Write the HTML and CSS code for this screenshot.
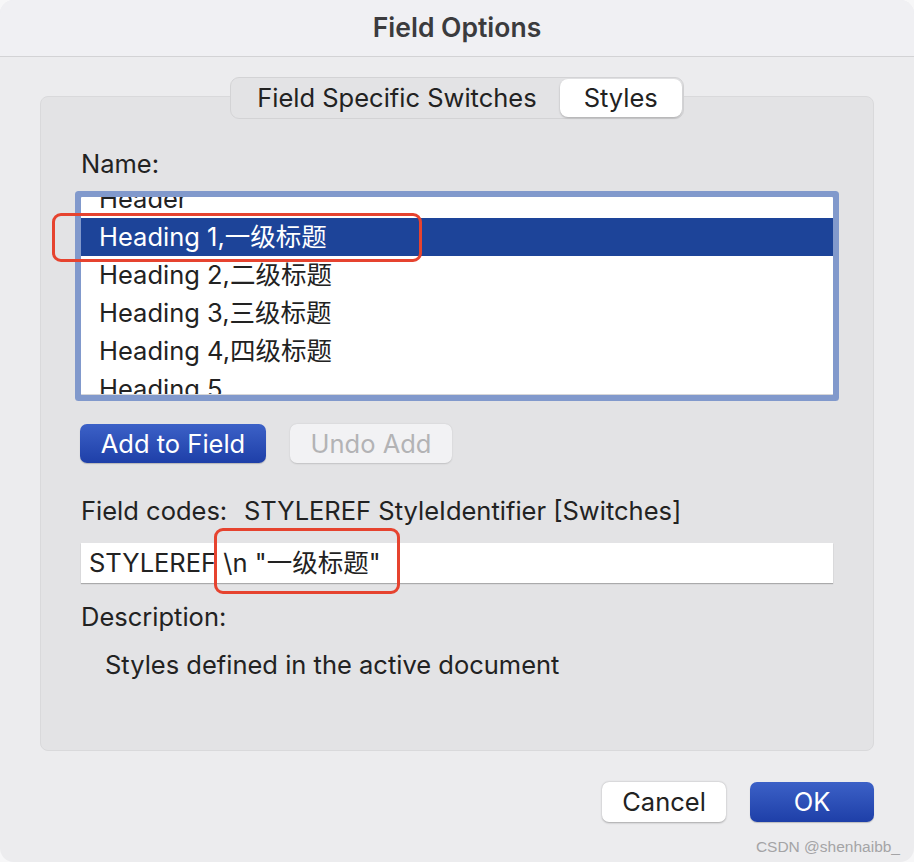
FILE: index.html
```html
<!DOCTYPE html>
<html>
<head>
<meta charset="utf-8">
<link rel="stylesheet" href="styles.css">
</head>
<body>
<div class="window">
  <div class="titlebar"><span class="title">Field Options</span></div>
  <div class="content">
    <div class="segmented">
      <div class="seg">Field Specific Switches</div>
      <div class="seg seg-active">Styles</div>
    </div>
    <div class="panel">
      <div class="label">Name:</div>
      <div class="list-wrap">
        <div class="list">
          <ul class="rows">
            <li class="row">Header</li>
            <li class="row row-sel">Heading 1,一级标题</li>
            <li class="row">Heading 2,二级标题</li>
            <li class="row">Heading 3,三级标题</li>
            <li class="row">Heading 4,四级标题</li>
            <li class="row">Heading 5</li>
          </ul>
        </div>
        <div class="mark mark-list"></div>
      </div>
      <div class="btn-row">
        <div class="btn btn-primary btn-add">Add to Field</div>
        <div class="btn btn-disabled btn-undo">Undo Add</div>
      </div>
      <div class="codes"><span class="codes-label">Field codes:</span><span class="codes-value">STYLEREF StyleIdentifier [Switches]</span></div>
      <div class="input-wrap">
        <div class="input">STYLEREF \n "一级标题"</div>
        <div class="mark mark-input"></div>
      </div>
      <div class="label desc-label">Description:</div>
      <div class="desc">Styles defined in the active document</div>
    </div>
    <div class="footer">
      <div class="btn btn-white btn-foot">Cancel</div>
      <div class="btn btn-primary btn-foot">OK</div>
    </div>
  </div>
  <div class="watermark">CSDN @shenhaibb_</div>
</div>
</body>
</html>
```

FILE: styles.css
```css
* { box-sizing: border-box; }
html, body {
  margin: 0;
  padding: 0;
  background: #f7f7f8;
}
body {
  width: 914px;
  height: 862px;
  font-family: Inter, "Noto Sans CJK SC", sans-serif;
  color: #222222;
  font-size: 25.5px;
  overflow: hidden;
}
.window {
  position: relative;
  width: 914px;
  height: 862px;
  background: #ececee;
  border-radius: 14px;
  overflow: hidden;
  display: flex;
  flex-direction: column;
}
.titlebar {
  height: 57px;
  background: #f0f0f3;
  border-bottom: 1px solid #d3d3d5;
  display: flex;
  align-items: center;
  justify-content: center;
  padding-bottom: 3px;
}
.title {
  font-weight: 600;
  font-size: 26.5px;
  color: #3b3b3d;
}
.content {
  padding: 0 40px;
  display: flex;
  flex-direction: column;
}
.segmented {
  position: relative;
  z-index: 1;
  align-self: center;
  margin-top: 20px;
  height: 42px;
  display: flex;
  align-items: center;
  padding: 0 1px;
  background: #e3e3e5;
  border: 1px solid #d3d3d5;
  border-radius: 9px;
}
.seg {
  height: 38px;
  line-height: 38px;
  padding: 0 23px 0 25px;
  color: #222222;
}
.seg-active {
  background: #ffffff;
  border-radius: 8px;
  box-shadow: 0 1px 2px rgba(0,0,0,0.25);
  padding: 0 24px;
}
.panel {
  margin-top: -23px;
  height: 655px;
  background: #e3e3e5;
  border: 1px solid #d9d9db;
  border-radius: 8px;
  padding: 54px 40px 0 40px;
  display: flex;
  flex-direction: column;
}
.label {
  line-height: 26px;
  height: 26px;
}
.list-wrap {
  position: relative;
  margin-top: 20px;
}
.list {
  height: 198px;
  background: #ffffff;
  overflow: hidden;
  border-radius: 1px;
  border-bottom: 1px solid #d6d6d8;
  box-shadow: 0 0 0 6px #8199cc;
}
.rows {
  list-style: none;
  margin: -17px 0 0 0;
  padding: 0;
}
.row {
  height: 38px;
  line-height: 38px;
  padding-left: 18px;
  white-space: nowrap;
}
.row-sel {
  background: #1d4499;
  color: #ffffff;
}
.mark {
  position: absolute;
  border: 3px solid #e6432f;
  border-radius: 9px;
}
.mark-list {
  left: -29px;
  top: 16px;
  width: 370px;
  height: 49px;
}
.btn-row {
  margin-top: 29px;
  display: flex;
  gap: 24px;
}
.btn {
  height: 39px;
  line-height: 39px;
  border-radius: 7px;
  text-align: center;
}
.btn-primary {
  color: #ffffff;
  background: linear-gradient(#3c61c7, #1e3fa8);
  box-shadow: 0 1px 1px rgba(0,0,0,0.2);
}
.btn-add {
  width: 186px;
  margin-left: -1px;
}
.btn-disabled {
  background: #f2f2f4;
  color: #b3b3b5;
  box-shadow: 0 0.5px 1.5px rgba(0,0,0,0.15);
}
.btn-undo {
  width: 162px;
}
.codes {
  margin-top: 35px;
  line-height: 26px;
  height: 26px;
  display: flex;
  white-space: nowrap;
}
.codes-label {
  width: 163px;
}
.input-wrap {
  position: relative;
  margin-top: 19px;
}
.input {
  height: 40px;
  line-height: 40px;
  background: #ffffff;
  padding-left: 8px;
  box-shadow: 0 1px 1px rgba(0,0,0,0.25);
}
.mark-input {
  left: 133px;
  top: -15px;
  width: 186px;
  height: 66px;
}
.desc-label {
  margin-top: 21px;
}
.desc {
  margin-top: 22px;
  line-height: 26px;
  padding-left: 24px;
}
.footer {
  margin-top: 31px;
  display: flex;
  justify-content: flex-end;
  gap: 24px;
}
.btn-foot {
  width: 124px;
  height: 40px;
  line-height: 40px;
}
.btn-white {
  background: #ffffff;
  color: #222222;
  box-shadow: 0 0.5px 2px rgba(0,0,0,0.3);
}
.watermark {
  position: absolute;
  right: 14px;
  bottom: 6px;
  font-size: 15.5px;
  color: #a4a4a6;
  font-family: "Liberation Sans", sans-serif;
}
```
